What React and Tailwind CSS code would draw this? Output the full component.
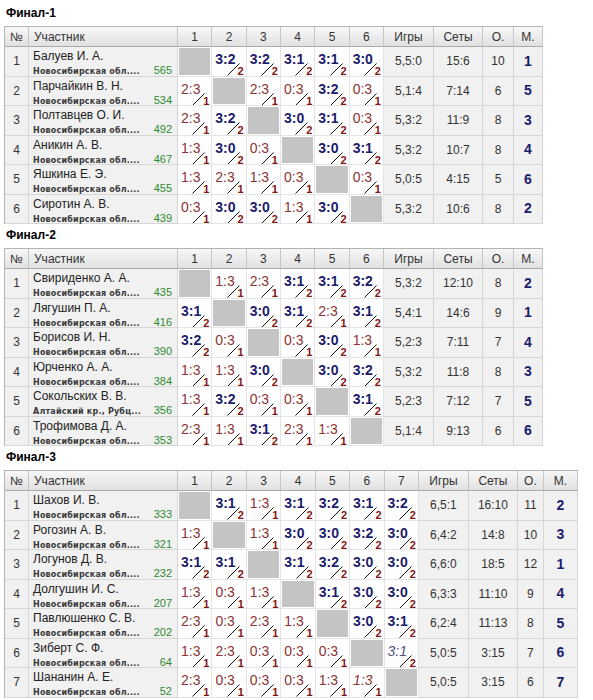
const FINALS = [
  {
    title: "Финал-1",
    grid: "grid-cols-[24px_149px_repeat(6,34.33px)_50px_49px_31px_29px]",
    rows: [
      ["Балуев И. А.", "Новосибирская обл....", 565, ["", "3:2", "3:2", "3:1", "3:1", "3:0"], "5,5:0", "15:6", 10, 1],
      ["Парчайкин В. Н.", "Новосибирская обл....", 534, ["2:3", "", "2:3", "0:3", "3:2", "0:3"], "5,1:4", "7:14", 6, 5],
      ["Полтавцев О. И.", "Новосибирская обл....", 492, ["2:3", "3:2", "", "3:0", "3:1", "0:3"], "5,3:2", "11:9", 8, 3],
      ["Аникин А. В.", "Новосибирская обл....", 467, ["1:3", "3:0", "0:3", "", "3:0", "3:1"], "5,3:2", "10:7", 8, 4],
      ["Яшкина Е. Э.", "Новосибирская обл....", 455, ["1:3", "2:3", "1:3", "0:3", "", "0:3"], "5,0:5", "4:15", 5, 6],
      ["Сиротин А. В.", "Новосибирская обл....", 439, ["0:3", "3:0", "3:0", "1:3", "3:0", ""], "5,3:2", "10:6", 8, 2],
    ],
  },
  {
    title: "Финал-2",
    grid: "grid-cols-[24px_149px_repeat(6,34.33px)_50px_49px_31px_29px]",
    rows: [
      ["Свириденко А. А.", "Новосибирская обл....", 435, ["", "1:3", "2:3", "3:1", "3:1", "3:2"], "5,3:2", "12:10", 8, 2],
      ["Лягушин П. А.", "Новосибирская обл....", 416, ["3:1", "", "3:0", "3:1", "2:3", "3:1"], "5,4:1", "14:6", 9, 1],
      ["Борисов И. Н.", "Новосибирская обл....", 390, ["3:2", "0:3", "", "0:3", "3:0", "1:3"], "5,2:3", "7:11", 7, 4],
      ["Юрченко А. А.", "Новосибирская обл....", 384, ["1:3", "1:3", "3:0", "", "3:0", "3:2"], "5,3:2", "11:8", 8, 3],
      ["Сокольских В. В.", "Алтайский кр., Рубц...", 356, ["1:3", "3:2", "0:3", "0:3", "", "3:1"], "5,2:3", "7:12", 7, 5],
      ["Трофимова Д. А.", "Новосибирская обл....", 353, ["2:3", "1:3", "3:1", "2:3", "1:3", ""], "5,1:4", "9:13", 6, 6],
    ],
  },
  {
    title: "Финал-3",
    grid: "grid-cols-[24px_149px_repeat(7,34.43px)_50px_49px_26px_34px]",
    rows: [
      ["Шахов И. В.", "Новосибирская обл....", 333, ["", "3:1", "1:3", "3:1", "3:2", "3:1", "3:2"], "6,5:1", "16:10", 11, 2],
      ["Рогозин А. В.", "Новосибирская обл....", 321, ["1:3", "", "1:3", "3:0", "3:0", "3:2", "3:0"], "6,4:2", "14:8", 10, 3],
      ["Логунов Д. В.", "Новосибирская обл....", 232, ["3:1", "3:1", "", "3:1", "3:2", "3:0", "3:0"], "6,6:0", "18:5", 12, 1],
      ["Долгушин И. С.", "Новосибирская обл....", 207, ["1:3", "0:3", "1:3", "", "3:1", "3:0", "3:0"], "6,3:3", "11:10", 9, 4],
      ["Павлюшенко С. В.", "Новосибирская обл....", 202, ["2:3", "0:3", "2:3", "1:3", "", "3:0", "3:1"], "6,2:4", "11:13", 8, 5],
      ["Зиберт С. Ф.", "Новосибирская обл....", 64, ["1:3", "2:3", "0:3", "0:3", "0:3", "", "3:1*"], "5,0:5", "3:15", 7, 6],
      ["Шананин А. Е.", "Новосибирская обл....", 52, ["2:3", "0:3", "0:3", "0:3", "1:3", "1:3*", ""], "5,0:5", "3:15", 6, 7],
    ],
  },
];

const CELL = "border-r border-b border-[#d6d6d6]";
const GRAY = "bg-[#f1f1f1]";

function HeadCell({ children, left }) {
  return (
    <div className={`flex items-center ${left ? "justify-start pl-[5px]" : "justify-center"} border-r border-b border-r-[#c6c6c6] border-b-[#a9a9a9] bg-gradient-to-b from-[#f7f7f7] to-[#e1e1e1] text-[12px] text-[#333]`}>
      {children}
    </div>
  );
}

function ScoreCell({ value }) {
  if (!value) {
    return (
      <div className="border-r border-b border-[#e4e4e4] bg-white p-[1px]">
        <div className="h-full bg-[#c4c4c4]" />
      </div>
    );
  }
  const tech = value.endsWith("*");
  const s = tech ? value.slice(0, -1) : value;
  const [a, b] = s.split(":").map(Number);
  const win = a > b;
  let color = win ? "font-bold text-[#1c1c6c]" : "text-[#8c3434]";
  if (tech) color = win ? "italic text-[#50507a]" : "italic text-[#8c3434]";

  return (
    <div className="flex flex-col border-r border-b border-[#e4e4e4] bg-white px-[3px] pt-[5px] overflow-hidden">
      <span className={`text-[14px] leading-[14px] whitespace-nowrap ${color}`}>{s}</span>
      {/* slash + small digit */}
      <div className="flex justify-end items-end -mt-[3px] -mr-[1px]">
        <svg width="13" height="13" viewBox="0 0 13 13" className="-mr-[2px] shrink-0">
          <line x1="0.5" y1="12.5" x2="12.5" y2="0.5" stroke="#151515" strokeWidth="1" />
        </svg>
        <span className="text-[11px] leading-[10px] font-bold text-[#821616]">{win ? 2 : 1}</span>
      </div>
    </div>
  );
}

function Table({ data }) {
  const n = data.rows.length;
  const nums = Array.from({ length: n }, (_, i) => i + 1);
  return (
    <div className={`grid ${data.grid} grid-rows-[20px] auto-rows-[29.5px] w-max border-l border-t border-[#b4b4b4]`}>
      <HeadCell>№</HeadCell>
      <HeadCell left>Участник</HeadCell>
      {nums.map(k => <HeadCell key={k}>{k}</HeadCell>)}
      <HeadCell>Игры</HeadCell>
      <HeadCell>Сеты</HeadCell>
      <HeadCell>О.</HeadCell>
      <HeadCell>М.</HeadCell>

      {data.rows.map(([name, region, rating, scores, games, sets, pts, place], i) => (
        <div key={name} className="contents">
          <div className={`${CELL} ${GRAY} flex items-center justify-center text-[12px] text-[#333]`}>{i + 1}</div>
          <div className={`${CELL} ${GRAY} flex flex-col pl-[4px] pr-[5px] pt-[3px]`}>
            <span className="text-[12px] leading-[13px] text-[#222] whitespace-nowrap">{name}</span>
            <div className="flex justify-between items-baseline mt-[2px]">
              <span className="font-['DejaVu_Sans',Verdana,sans-serif] text-[8px] font-bold tracking-[0.2px] text-[#3a3a3a] whitespace-nowrap">{region}</span>
              <span className="text-[11px] leading-[11px] text-[#2f8a2f]">{rating}</span>
            </div>
          </div>
          {scores.map((v, j) => <ScoreCell key={j} value={v} />)}
          <div className={`${CELL} ${GRAY} flex items-center justify-center text-[12px] text-[#333]`}>{games}</div>
          <div className={`${CELL} ${GRAY} flex items-center justify-center text-[12px] text-[#333]`}>{sets}</div>
          <div className={`${CELL} ${GRAY} flex items-center justify-center text-[12px] text-[#333]`}>{pts}</div>
          <div className={`${CELL} ${GRAY} flex items-center justify-center text-[14px] font-bold text-[#1c1c6c]`}>{place}</div>
        </div>
      ))}
    </div>
  );
}

export default function App() {
  return (
    <div className="min-h-screen bg-white pl-[4px] font-['Liberation_Sans',Arial,sans-serif]">
      {FINALS.map((f, idx) => (
        <div key={f.title}>
          <div className={`${idx === 0 ? "h-[26px]" : "h-[24px]"} flex items-end pb-[4px] pl-[2px] text-[12px] font-bold text-black`}>
            {f.title}
          </div>
          <Table data={f} />
        </div>
      ))}
    </div>
  );
}
